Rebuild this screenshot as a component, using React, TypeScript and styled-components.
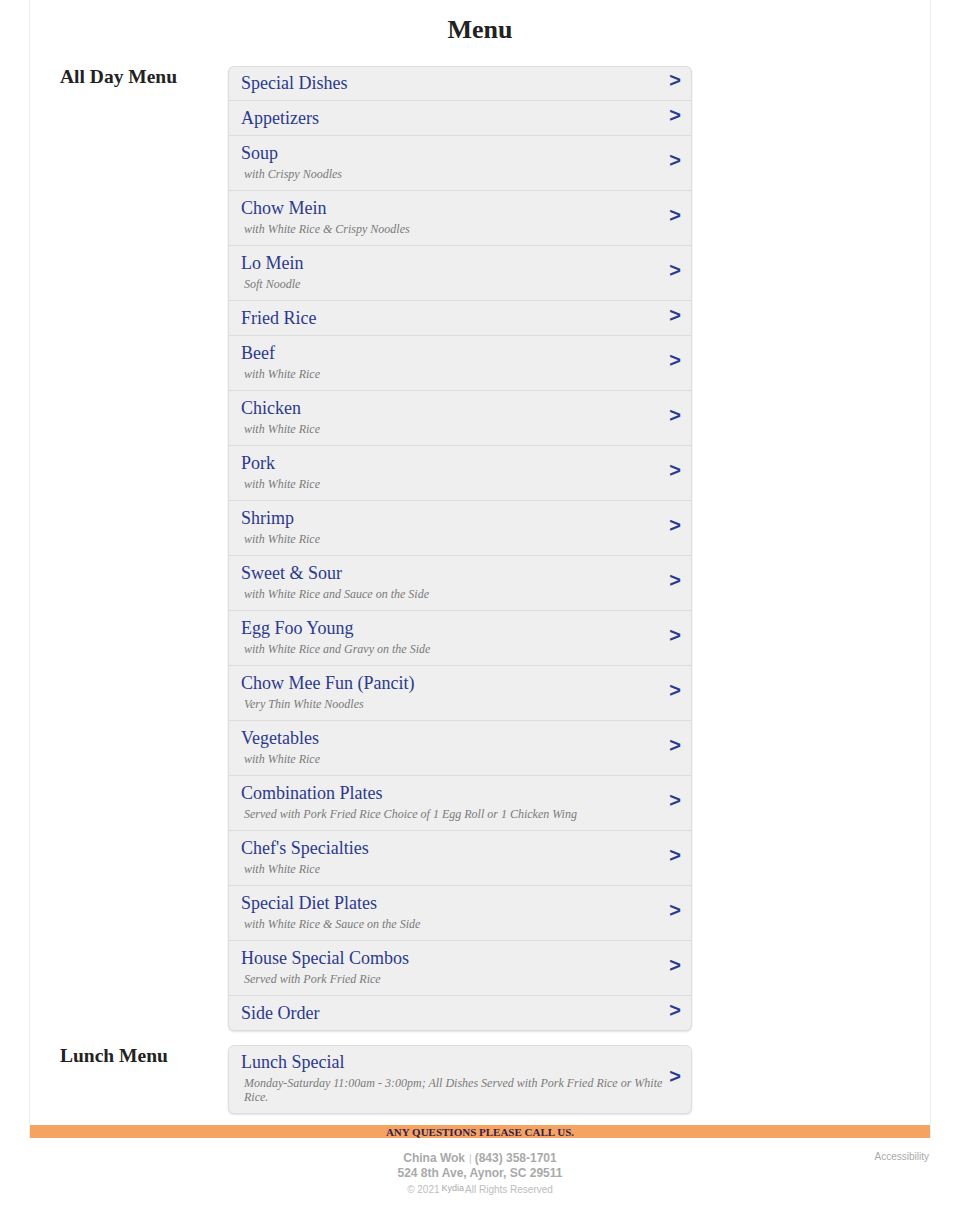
import React from "react";
import styled, { createGlobalStyle } from "styled-components";

const Global = createGlobalStyle`
  html, body { margin: 0; padding: 0; background: #fff; }
  body { font-family: "Liberation Serif", "Times New Roman", serif; }
  * { box-sizing: border-box; }
`;

const Page = styled.div`
  width: 902px;
  margin: 0 auto;
  border-left: 1px solid #eeeeee;
  border-right: 1px solid #eeeeee;
`;

const Title = styled.h1`
  margin: 0;
  padding-top: 15px;
  font-size: 26px;
  line-height: 30px;
  font-weight: bold;
  text-align: center;
  color: #222;
`;

const Sections = styled.div`
  display: flex;
  flex-direction: column;
  gap: 14px;
  padding: 21px 30px 0 30px;
`;

const Section = styled.section`
  display: grid;
  grid-template-columns: 168px 464px;
  align-items: start;
`;

const SectionLabel = styled.h2`
  margin: 0;
  font-size: 19.5px;
  line-height: 22px;
  font-weight: bold;
  color: #222;
`;

const List = styled.div`
  background: #efefef;
  border: 1px solid #dddddd;
  border-radius: 6px;
  box-shadow: 0 1px 2px rgba(0, 0, 0, 0.12);
  overflow: hidden;
`;

const Row = styled.div`
  display: grid;
  grid-template-columns: 1fr 16px;
  align-items: center;
  padding: 6px 8px 6px 12px;
  &:first-child {
    padding-top: 5px;
  }
  & + & {
    border-top: 1px solid #dddddd;
  }
`;

const RowText = styled.div`
  display: flex;
  flex-direction: column;
`;

const Name = styled.span`
  font-size: 18px;
  line-height: 22px;
  color: #2b3a8c;
`;

const Sub = styled.span`
  font-size: 12px;
  line-height: 14px;
  font-style: italic;
  color: #7a7a7a;
  padding: 3px 0 3px 3px;
`;

const Arrow = styled.span`
  font-family: "Liberation Sans", Arial, sans-serif;
  font-weight: bold;
  font-size: 20px;
  line-height: 14px;
  color: #2b3990;
  text-align: center;
  margin-bottom: 6px;
`;

const Banner = styled.div`
  margin-top: 11px;
  background: #f4a460;
  text-align: center;
  font-size: 11px;
  line-height: 12px;
  font-weight: bold;
  color: #35204f;
  padding: 1px 0 0;
`;

const Footer = styled.footer`
  width: 902px;
  margin: 0 auto;
  display: grid;
  grid-template-columns: 1fr auto 1fr;
  padding-top: 13px;
  font-family: "Liberation Sans", Arial, sans-serif;
`;

const FooterCenter = styled.div`
  grid-column: 2;
  text-align: center;
  color: #a9a9a9;
`;

const FooterLine = styled.div`
  font-size: 12px;
  line-height: 14px;
  font-weight: bold;
`;

const Sep = styled.span`
  font-size: 10px;
  font-weight: normal;
  color: #c4c4c4;
  margin: 0 3px 0 4px;
`;

const Copy = styled.div`
  font-size: 10px;
  line-height: 12px;
  color: #bdbdbd;
  margin-top: 2px;
`;

const Brand = styled.span`
  font-size: 9px;
  vertical-align: 2px;
  color: #a9a9a9;
  margin: 0 1px 0 2px;
`;

const Access = styled.div`
  grid-column: 3;
  justify-self: end;
  padding-right: 2px;
  font-size: 10px;
  line-height: 12px;
  color: #aaaaaa;
`;

type Item = { name: string; sub?: string };

const allDay: Item[] = [
  { name: "Special Dishes" },
  { name: "Appetizers" },
  { name: "Soup", sub: "with Crispy Noodles" },
  { name: "Chow Mein", sub: "with White Rice & Crispy Noodles" },
  { name: "Lo Mein", sub: "Soft Noodle" },
  { name: "Fried Rice" },
  { name: "Beef", sub: "with White Rice" },
  { name: "Chicken", sub: "with White Rice" },
  { name: "Pork", sub: "with White Rice" },
  { name: "Shrimp", sub: "with White Rice" },
  { name: "Sweet & Sour", sub: "with White Rice and Sauce on the Side" },
  { name: "Egg Foo Young", sub: "with White Rice and Gravy on the Side" },
  { name: "Chow Mee Fun (Pancit)", sub: "Very Thin White Noodles" },
  { name: "Vegetables", sub: "with White Rice" },
  { name: "Combination Plates", sub: "Served with Pork Fried Rice Choice of 1 Egg Roll or 1 Chicken Wing" },
  { name: "Chef's Specialties", sub: "with White Rice" },
  { name: "Special Diet Plates", sub: "with White Rice & Sauce on the Side" },
  { name: "House Special Combos", sub: "Served with Pork Fried Rice" },
  { name: "Side Order" },
];

const lunch: Item[] = [
  {
    name: "Lunch Special",
    sub: "Monday-Saturday 11:00am - 3:00pm; All Dishes Served with Pork Fried Rice or White Rice.",
  },
];

const MenuList = ({ items }: { items: Item[] }) => (
  <List>
    {items.map((it) => (
      <Row key={it.name}>
        <RowText>
          <Name>{it.name}</Name>
          {it.sub && <Sub>{it.sub}</Sub>}
        </RowText>
        <Arrow>&gt;</Arrow>
      </Row>
    ))}
  </List>
);

export default function App() {
  return (
    <>
      <Global />
      <Page>
        <Title>Menu</Title>
        <Sections>
          <Section>
            <SectionLabel>All Day Menu</SectionLabel>
            <MenuList items={allDay} />
          </Section>
          <Section>
            <SectionLabel>Lunch Menu</SectionLabel>
            <MenuList items={lunch} />
          </Section>
        </Sections>
        <Banner>ANY QUESTIONS PLEASE CALL US.</Banner>
      </Page>
      <Footer>
        <FooterCenter>
          <FooterLine>
            China Wok<Sep>|</Sep>(843) 358-1701
          </FooterLine>
          <FooterLine>524 8th Ave, Aynor, SC 29511</FooterLine>
          <Copy>
            © 2021<Brand>Kydia</Brand>All Rights Reserved
          </Copy>
        </FooterCenter>
        <Access>Accessibility</Access>
      </Footer>
    </>
  );
}
